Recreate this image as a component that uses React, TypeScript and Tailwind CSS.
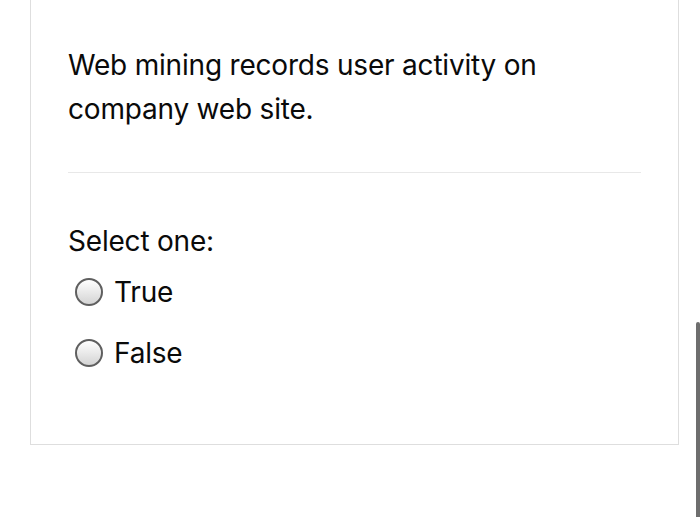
export default function App() {
  const options = ["True", "False"];

  return (
    <div className="w-[700px] h-[517px] bg-white overflow-hidden flex">
      <div className="flex-1">
        <div
          className="ml-[30px] w-[649px] border-x border-b border-[#dedede] pt-[43px] px-[37px] pb-[69px] text-[#0a0a0a]"
          style={{ fontFamily: "Inter, 'Liberation Sans', sans-serif" }}
        >
          <p className="text-[28px] leading-[44px] tracking-[-0.2px]">
            Web mining records user activity on company web site.
          </p>

          <div className="mt-[41px] border-t border-[#e8e8e8]" />

          <div className="mt-[46px] text-[28px] leading-[44px] tracking-[-0.2px]">
            Select one:
          </div>

          <div className="mt-[7px] flex flex-col gap-[17px]">
            {options.map((opt) => (
              <label key={opt} className="flex items-center h-[44px] text-[28px] tracking-[-0.2px]">
                <span className="ml-[7px] mr-[11px] w-[28px] h-[28px] rounded-full border-2 border-[#5f5f5f] bg-gradient-to-b from-[#ffffff] to-[#d4d4d4]" />
                {opt}
              </label>
            ))}
          </div>
        </div>
      </div>
      <div className="w-[4px] flex flex-col">
        <div className="h-[322px]" />
        <div className="flex-1 bg-[#6e6e6e] rounded-t-[2px]" />
      </div>
    </div>
  );
}
